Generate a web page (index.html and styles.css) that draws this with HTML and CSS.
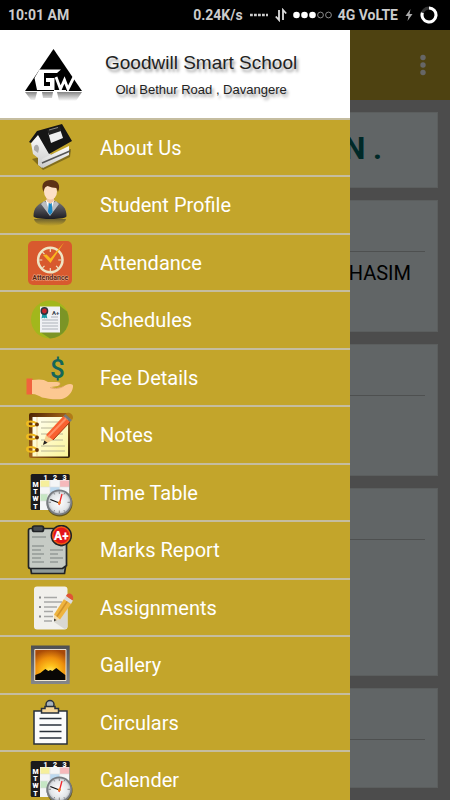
FILE: index.html
```html
<!DOCTYPE html>
<html lang="en">
<head>
<meta charset="utf-8">
<meta name="viewport" content="width=device-width, initial-scale=1">
<title>Goodwill Smart School</title>
<link rel="stylesheet" href="styles.css">
</head>
<body>
<svg class="defs" aria-hidden="true">
  <defs>
    <linearGradient id="suit" x1="0" y1="0" x2="0" y2="1"><stop offset="0" stop-color="#77777c"/><stop offset="1" stop-color="#1c1c22"/></linearGradient>
    <linearGradient id="fade" x1="0" y1="0" x2="0" y2="1"><stop offset="0" stop-color="#333" stop-opacity=".6"/><stop offset="1" stop-color="#333" stop-opacity="0"/></linearGradient>
    <linearGradient id="wood" x1="0" y1="0" x2="1" y2="1"><stop offset="0" stop-color="#4a2203"/><stop offset=".5" stop-color="#a5651a"/><stop offset="1" stop-color="#2e2008"/></linearGradient>
    <linearGradient id="page" x1="0" y1="0" x2="1" y2="1"><stop offset="0" stop-color="#fffff4"/><stop offset="1" stop-color="#fcf59a"/></linearGradient>
    <linearGradient id="frame" x1="0" y1="0" x2="0" y2="1"><stop offset="0" stop-color="#4d4f52"/><stop offset="1" stop-color="#85878a"/></linearGradient>
    <radialGradient id="sunset" cx=".5" cy=".75" r=".75"><stop offset="0" stop-color="#fff27a"/><stop offset=".3" stop-color="#ffc31c"/><stop offset=".65" stop-color="#ee8f0c"/><stop offset="1" stop-color="#a84a08"/></radialGradient>
    <radialGradient id="dial"><stop offset="0" stop-color="#fff"/><stop offset=".75" stop-color="#e2e5e8"/><stop offset="1" stop-color="#aeb2b6"/></radialGradient>
    <linearGradient id="wall" x1="0" y1="0" x2="0" y2="1"><stop offset="0" stop-color="#fff"/><stop offset="1" stop-color="#c9c9c9"/></linearGradient>
    <symbol id="timetable" viewBox="0 0 50 50">
      <rect x="5.700" y="6" width="39" height="36" rx="1.500" fill="#1b1b1d"/>
      <path d="M15 12h29.500v30H15z" fill="#f4f5f6"/>
      <path d="M15.500 12.500h9v6.500h-9z" fill="#f6ef9c"/><path d="M35 12.500h9v6.500h-9z" fill="#f6b9bb"/><path d="M25 19h9.500v6H25z" fill="#bcd9ef"/><path d="M15.500 26h7v7h-7z" fill="#c6e6c4"/>
      <path d="M25 12v30M34.700 12v30M15 19h29M15 26h29M15 33h29" stroke="#dcdedf" stroke-width=".6"/>
      <g fill="#fff" font-family="Roboto, sans-serif" font-weight="900" font-size="7" text-anchor="middle"><text x="20.500" y="11.500">1</text><text x="30" y="11.500">2</text><text x="39.500" y="11.500">3</text><text x="10.500" y="19">M</text><text x="10.500" y="26">T</text><text x="10.500" y="33">W</text><text x="10.500" y="40.500">T</text></g>
      <circle cx="34.500" cy="35.500" r="13" fill="#1118"/>
      <circle cx="34.300" cy="34.300" r="12" fill="url(#dial)" stroke="#777b80" stroke-width="1.800"/>
      <path d="M34.300 23.500v2.500M34.300 42.500v2.500M23.500 34.300h2.500M42.500 34.300h2.500M28.900 25l.8 1.500M39.700 25l-.8 1.500M28.900 43.600l.8-1.500M39.700 43.600l-.8-1.500" stroke="#666" stroke-width=".7"/>
      <path d="M34.300 35l-9-3.500" stroke="#111" stroke-width="1.300"/><path d="M34 37l3-11" stroke="#f0282c" stroke-width="1.300"/><circle cx="34.300" cy="34.800" r="1.500" fill="#e87b20"/>
    </symbol>
  </defs>
</svg>

<header class="status">
  <span>10:01 AM</span>
  <div class="status-right">
    <span>0.24K/s</span>
    <svg class="dots" viewBox="0 0 20 14" aria-hidden="true"><path d="M1 7h18" stroke="#ccc" stroke-width="2.400" stroke-dasharray="2.800 1.200"/></svg>
    <svg class="arrows" viewBox="0 0 12 14" aria-hidden="true"><path d="M4 2v10L.8 8.500M8 12V2l3.200 3.500" fill="none" stroke="#ddd" stroke-width="1.800"/></svg>
    <svg class="signal" viewBox="0 0 39 14" aria-hidden="true"><g fill="#fff"><circle cx="3.500" cy="7" r="3.300"/><circle cx="11.500" cy="7" r="3.300"/><circle cx="19.500" cy="7" r="3.300"/></g><g fill="none" stroke="#aaa" stroke-width=".8"><circle cx="27.500" cy="7" r="2.900"/><circle cx="35.500" cy="7" r="2.900"/></g></svg>
    <span>4G VoLTE</span>
    <svg class="bolt" viewBox="0 0 10 14" aria-hidden="true"><path d="M6.500 1L1.500 8h3L3.500 13l5-7h-3z" fill="#aaa"/></svg>
    <svg class="ring" viewBox="0 0 18 18" aria-hidden="true"><circle cx="9" cy="9" r="7" fill="none" stroke="#333" stroke-width="3"/><path d="M9 2a7 7 0 1 1-6.600 4.700" fill="none" stroke="#fff" stroke-width="3"/></svg>
  </div>
</header>

<div class="screen">
  <div class="appbar">
    <button class="more" aria-label="More options"><svg viewBox="0 0 6 22" aria-hidden="true"><g fill="#fff"><circle cx="3" cy="3.500" r="2.700"/><circle cx="3" cy="11" r="2.700"/><circle cx="3" cy="18.500" r="2.700"/></g></svg></button>
  </div>
  <main class="feed">
    <section class="card banner"><h1>N .</h1></section>
    <section class="card medium"><p>HASIM</p></section>
    <section class="card medium"></section>
    <section class="card tall"></section>
    <section class="card short"></section>
  </main>
  <div class="scrim"></div>

  <nav class="drawer" aria-label="Main menu">
    <div class="brand">
      <svg class="logo" viewBox="0 0 60 58" aria-hidden="true">
        <path d="M28.500 2L57 44H0z" fill="#000"/>
        <path d="M14.500 22.500H36l-4 3.500H19v13h6v-4h-4v-4h8.500v12H12L9.500 31z" fill="#fff"/>
        <path d="M31 30l4.500 12 4-9 3.500 9 6-12" fill="none" stroke="#fff" stroke-width="2.800"/>
        <path d="M29 43h12v2H29z" fill="#fff"/>
        <path d="M0 45h12l-2 8H6zM17 45h11l-1 6h-9zM32 45h25l-6 9H34z" fill="url(#fade)"/>
      </svg>
      <div class="brand-text">
        <h2>Goodwill Smart School</h2>
        <p>Old Bethur Road , Davangere</p>
      </div>
    </div>
    <ul class="menu">
      <li><a href="#about"><svg viewBox="0 0 50 50" aria-hidden="true">
        <path d="M7 36l11 11 27-13 1-8z" fill="#0005"/>
        <path d="M6 20l8-10 12 22-3 8-6 5-4-3v-7l-5-4z" fill="url(#wall)"/>
        <path d="M17 36l27-13v9L18 45z" fill="url(#wall)"/><path d="M17 40l28-12" stroke="#555" stroke-width="1.500"/>
        <path d="M12 8L37 1l10 17-23 13L13 12 6 20l-2-1z" fill="#151515"/>
        <path d="M23 9l12-3 3 9-12 5z" fill="#eee"/><path d="M22 7l13-4 1 5-12 4z" fill="#222"/><path d="M24 7l9-2.500" stroke="#888"/>
        <path d="M9 24c2-4 5-2 5 2l-1 4-4-3z" fill="#aaa"/></svg>About Us</a></li>
      <li><a href="#profile"><svg viewBox="0 0 50 50" aria-hidden="true">
        <path d="M9 39h32c-1 5-8 7-16 7S10 44 9 39z" fill="url(#fade)"/>
        <path d="M8.500 36c0-8 4-12 12-15h9c8 3 12 7 12 15 0 2-5 3-16.500 3S8.500 38 8.500 36z" fill="url(#suit)"/>
        <path d="M19 21l6 4 6-4 3 3-9 12-9-12z" fill="#b9bcc1"/><path d="M20.500 20L25 33l4.500-13z" fill="#fff"/>
        <path d="M23.700 23h3l.8 9-2.300 3-2.200-3z" fill="#1b87c4"/>
        <path d="M21.500 15h7.500v6l-3.700 3-3.800-3z" fill="#efc7a6"/><ellipse cx="25.500" cy="11.500" rx="6.500" ry="8" fill="#fde0c6"/>
        <path d="M18.500 12C15.500 4 19 0 26 0s10 5 7 12l-1.500-4c-3 0-6-1-9-2-3 1-3.500 3-4 6z" fill="#5d3216"/></svg>Student Profile</a></li>
      <li><a href="#attendance"><svg viewBox="0 0 50 50" aria-hidden="true">
        <rect x="3" y="3" width="44" height="44" rx="5" fill="#d8592e"/>
        <circle cx="25.300" cy="22" r="12.200" fill="none" stroke="#efe4c4" stroke-width="2.500"/>
        <path d="M25.300 11v3M25.300 30v3M14.300 22h3M33.300 22h3M17.500 14.200l2 2M33.100 29.800l-2-2M17.500 29.800l2-2" stroke="#efe4c4" stroke-width="1.200"/>
        <path d="M18 17l3.500-.5 4 4L39 4.500 25.500 25z" fill="#f9b81f"/>
        <text x="25.300" y="42" text-anchor="middle" font-family="Roboto, sans-serif" font-size="7" font-weight="700" fill="#5a2310" stroke="#efb593" stroke-width="1" paint-order="stroke">Attendance</text></svg>Attendance</a></li>
      <li><a href="#schedules"><svg viewBox="0 0 50 50" aria-hidden="true">
        <circle cx="25" cy="24.500" r="19" fill="#a2b71c"/><path d="M35 11l7 5.500a19 19 0 0 1-17 27L15 37z" fill="#7b9426"/>
        <path d="M15 11.500h20v26H15z" fill="#f0f1f4"/>
        <path d="M17 22h4M26 22h7M17 25h16M17 28h16M17 31h16M17 34h16" stroke="#adb2b9" stroke-width="1"/>
        <path d="M17.500 18l-1 5.500 2-1 .8 1 1-1 2 1-1-5.500z" fill="#189aa3"/><circle cx="19.400" cy="16" r="3.900" fill="#29343f"/><circle cx="19.400" cy="16" r="2.400" fill="#c7262d"/>
        <text x="27" y="20" font-family="Roboto, sans-serif" font-weight="700" font-size="6" fill="#37444f">A+</text></svg>Schedules</a></li>
      <li><a href="#fees"><svg viewBox="0 0 50 50" aria-hidden="true">
        <path d="M1.500 25.500h6v16h-6z" fill="#f0633d"/>
        <path d="M7 27c7-1 12-1 16 2h9c4 0 4 3 1 4l-7 1c5 2 10 1 15-2 4-2 8-1 7 2-1 6-5 10-11 12-7 1-15-.5-20-1.500-3-1.500-6-3.500-10-3.500z" fill="#fcc892"/>
        <path d="M25 34.500c5 2 10 1 14-1.500M33 33c2-1 3-2 1-4" fill="none" stroke="#dd9d65" stroke-width=".7"/>
        <text x="32.500" y="25" text-anchor="middle" font-family="Roboto, sans-serif" font-weight="500" font-size="26" fill="#14665a">$</text></svg>Fee Details</a></li>
      <li><a href="#notes"><svg viewBox="0 0 50 50" aria-hidden="true">
        <rect x="4" y="3" width="41" height="45" rx="2" fill="url(#wood)"/><path d="M7.500 7H43v39.500H7.500z" fill="url(#page)"/>
        <path d="M12 7v39" stroke="#ecc47c" stroke-width=".7"/><path d="M16 12h22M16 18h22M16 24h22M16 30h22M16 36h24M16 41h24" stroke="#a8a58b" stroke-width=".8"/>
        <g fill="none" stroke="#f1ba1e" stroke-width="2"><path d="M12 14.500c-4 3-10 2-10-1s6-2.500 10 0"/><path d="M12 27.500c-4 3-10 2-10-1s6-2.500 10 0"/><path d="M12 40c-4 3-10 2-10-1s6-2.500 10 0"/></g>
        <g fill="#683408"><circle cx="12" cy="14.500" r="1.900"/><circle cx="12" cy="27.500" r="1.900"/><circle cx="12" cy="40" r="1.900"/></g>
        <path d="M18 35l3-10 7 5z" fill="#f6cf8c"/><path d="M18 35l1.300-4.500 3.200 2.300z" fill="#222"/>
        <path d="M21 25L38.500 6l6.500 6-17 18z" fill="#f9602f"/><path d="M23 27L41 8.500" stroke="#ff8f66" stroke-width="2"/><path d="M28 30l17-18" stroke="#a83410" stroke-width="1"/>
        <path d="M38.500 6l2-2 6.500 6-2 2z" fill="#777"/><path d="M40.500 4c3-3.500 10 1.500 6.500 6z" fill="#b17b17"/></svg>Notes</a></li>
      <li><a href="#timetable"><svg aria-hidden="true"><use href="#timetable"/></svg>Time Table</a></li>
      <li><a href="#marks"><svg viewBox="0 0 50 50" aria-hidden="true">
        <g stroke="#202326" stroke-width="1.700"><path d="M5.500 42h35l-1 6.500h-33z" fill="#8e9a99"/><path d="M5.500 3.500h34q2 0 2 2v35l-4 3H5.500q-2 0-2-2v-36q0-2 2-2z" fill="#c6cbc5"/><rect x="7.500" y="1" width="11" height="5.500" rx="2" fill="#464b50"/></g>
        <path d="M7 12h14M7 21h12M7 25h9M7 29h12M7 33h9M7 37h12M25 25h13M25 29h8M25 33h13M25 37h8M35 21h3" stroke="#949b96" stroke-width="1.300"/>
        <circle cx="36.300" cy="10.500" r="10" fill="#f05a13" stroke="#202326" stroke-width="1.500"/><circle cx="36.300" cy="10.500" r="7.800" fill="#e3151b"/>
        <text x="36.300" y="14.800" text-anchor="middle" font-family="Roboto, sans-serif" font-weight="900" font-size="12" fill="#fff">A+</text></svg>Marks Report</a></li>
      <li><a href="#assignments"><svg viewBox="0 0 50 50" aria-hidden="true">
        <rect x="9" y="3.500" width="33.500" height="43" rx="3" fill="#f1f0ec"/><path d="M29 39l13.500-18v22q0 3-3 3z" fill="#d9d8d2"/>
        <path d="M19 14.500h13M19 19h18M19 24h13M19 28.500h9M19 33.500h9M19 38h8" stroke="#a8a8a6" stroke-width="1.300"/><path d="M14 14.500h2M14 24h2M14 33.500h2" stroke="#888" stroke-width="1.800"/>
        <path d="M29 38.500v-7l6 4.500z" fill="#f5dcab"/><path d="M29 38.500v-3l2.600 1.600z" fill="#444"/>
        <path d="M29 31.500L39 16l7 5-11 15.500z" fill="#efb43f"/><path d="M32 33.500L42.500 18" stroke="#cf922c" stroke-width="1.500"/><path d="M39 16l2-3 7 4.500-2 3.500z" fill="#dcdddd"/><path d="M41 13c1-4.500 9-3 6.800 4.500z" fill="#df5436"/></svg>Assignments</a></li>
      <li><a href="#gallery"><svg viewBox="0 0 50 50" aria-hidden="true">
        <path d="M6 5.500h38.700V44H6z" fill="url(#frame)"/><path d="M9.800 9.500H41v31H9.800z" fill="url(#sunset)" stroke="#f5f0e5" stroke-width=".9"/>
        <path d="M10.300 35l5-2 5-4 3 2 2-1 2 1 4-3 5 4 4 3v5h-30z" fill="#090705"/></svg>Gallery</a></li>
      <li><a href="#circulars"><svg viewBox="0 0 50 50" aria-hidden="true">
        <g stroke="#29303b" stroke-width="1.500"><path d="M9 13h33v33H9z" fill="#fbfbfc"/><circle cx="25" cy="6.500" r="4" fill="#a9b4bd"/><path d="M20 8.500h10v2h3.500v4.500h-17v-4.500H20z" fill="#f5d69c"/></g>
        <path d="M14.500 20.500h22M14.500 27h22M14.500 33.500h22M14.500 40h22" stroke="#29303b" stroke-width="1.700"/></svg>Circulars</a></li>
      <li><a href="#calendar"><svg aria-hidden="true"><use href="#timetable"/></svg>Calender</a></li>
    </ul>
  </nav>
</div>
</body>
</html>
```
FILE: styles.css
```css
* { box-sizing: border-box; }

body {
  margin: 0;
  height: 100vh;
  display: flex;
  flex-direction: column;
  overflow: hidden;
  font-family: Roboto, "Liberation Sans", sans-serif;
  background: #bebebe;
}

h1, h2, p, ul { margin: 0; padding: 0; }
svg { display: block; flex: none; }
.defs { position: absolute; width: 0; height: 0; }

.status {
  flex: none;
  display: flex;
  justify-content: space-between;
  align-items: center;
  height: 30px;
  padding: 0 12px 0 8px;
  background: #000;
  color: #ccc;
  font-size: 14px;
  font-weight: 700;
}
.status-right { display: flex; align-items: center; gap: 6px; }
.dots { width: 20px; height: 14px; }
.arrows { width: 12px; height: 14px; }
.signal { width: 39px; height: 14px; }
.bolt { width: 10px; height: 14px; }
.ring { width: 18px; height: 18px; }

.screen { position: relative; flex: 1; min-height: 0; overflow: hidden; }

.appbar {
  display: flex;
  justify-content: flex-end;
  align-items: center;
  height: 70px;
  padding: 0 24px;
  background: #c4a52c;
}
.more { padding: 0; border: 0; background: none; }
.more svg { width: 6px; height: 22px; }

.feed { display: grid; gap: 12px; padding: 12px; }
.card {
  background: #f2fcff;
  border: 1px solid #e4ebec;
  padding: 50px 12px 0;
}
.card::before { content: ""; display: block; border-top: 1px solid #c4c8c9; }
.banner { height: 76px; padding: 16px 55px; }
.banner::before { display: none; }
.banner h1 { font-size: 31px; line-height: 40px; text-align: right; color: #006864; }
.medium { height: 132px; }
.medium p { padding: 8px 14px; font-size: 20px; line-height: 26px; text-align: right; }
.tall { height: 188px; }
.short { height: 100px; }

.scrim { position: absolute; inset: 0; background: rgba(0, 0, 0, 0.6); }

.drawer {
  position: absolute;
  inset: 0 auto 0 0;
  width: 350px;
  max-width: 85%;
  overflow-y: auto;
  scrollbar-width: none;
  background: #c3a52b;
}
.brand {
  display: flex;
  align-items: center;
  gap: 20px;
  height: 88px;
  padding: 4px 25px 0;
  background: #fff;
  font-family: "Liberation Sans", Arial, sans-serif;
  color: #222;
  text-shadow: 2px 3px 3px #999;
}
.logo { width: 60px; height: 58px; }
.brand-text { display: grid; gap: 8px; justify-items: center; padding-bottom: 2px; white-space: nowrap; }
.brand h2 { font-size: 19px; line-height: 22px; font-weight: 400; }
.brand p { font-size: 13px; line-height: 16px; }

.menu { display: grid; grid-auto-rows: 57px 58px; list-style: none; }
.menu a {
  display: flex;
  align-items: center;
  gap: 25px;
  height: 100%;
  padding: 0 25px;
  border-top: 2px solid #c5bda0;
  color: #fff;
  font-size: 20px;
  text-decoration: none;
}
.menu svg { width: 50px; height: 50px; }
```
